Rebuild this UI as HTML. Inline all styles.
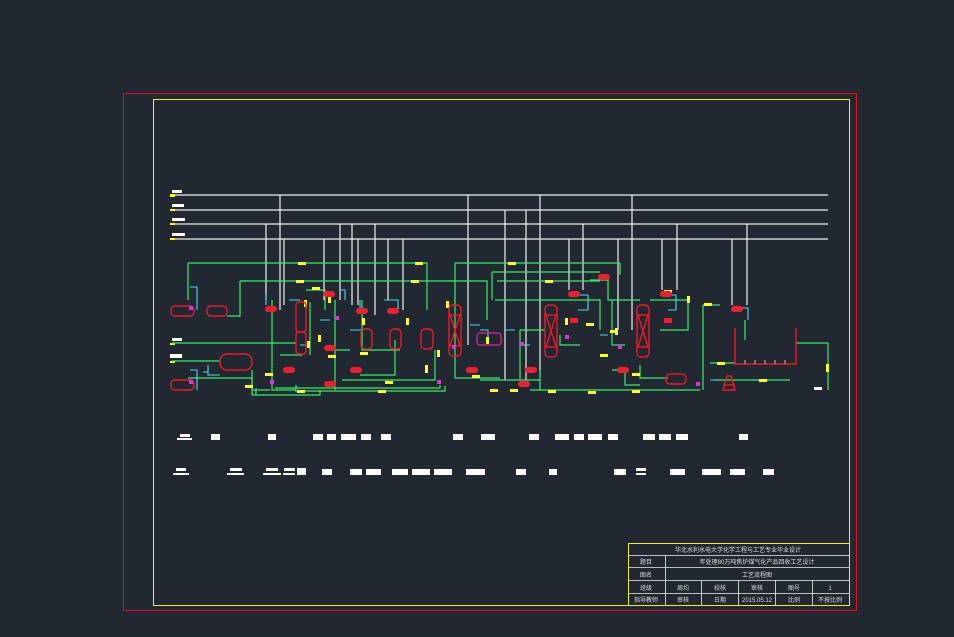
<!DOCTYPE html>
<html><head><meta charset="utf-8"><style>
html,body{margin:0;padding:0;background:#222831;}
body{width:954px;height:637px;overflow:hidden;position:relative;font-family:"Liberation Sans","Noto Sans CJK SC",sans-serif;}
svg{position:absolute;left:0;top:0}
</style></head><body>
<svg width="954" height="637" viewBox="0 0 954 637" xmlns="http://www.w3.org/2000/svg">
<rect x="0" y="0" width="954" height="637" fill="#222831"/>
<g fill="#e01010">
<rect x="123" y="93" width="734" height="1"/><rect x="123" y="610" width="734" height="1"/>
<rect x="123" y="93" width="1" height="518"/><rect x="856" y="93" width="1" height="518"/>
</g>
<g fill="#f0f028">
<rect x="153" y="99" width="697" height="1"/><rect x="153" y="605" width="697" height="1"/>
<rect x="153" y="99" width="1" height="507"/><rect x="849" y="99" width="1" height="507"/>
</g>

<g stroke="#f0f0f0" stroke-width="1.2" fill="none">
<line x1="172" y1="195" x2="828" y2="195"/>
<line x1="172" y1="210" x2="828" y2="210"/>
<line x1="172" y1="224" x2="828" y2="224"/>
<line x1="172" y1="239" x2="828" y2="239"/>
<path d="M280 195V310 M266 224V300 M284 239V305 M324 239V300 M340 224V300 M352 224V305 M358 239V305 M375 224V315 M388 239V300 M403 239V310 M468 195V345 M505 210V380 M526 210V380 M540 195V375 M569 239V290 M583 224V290 M618 239V330 M632 195V330 M662 239V290 M677 224V290 M732 239V305 M747 224V305"/>
</g>
<g fill="#fff">
<rect x="172" y="190" width="10" height="3"/><rect x="172" y="204" width="12" height="3"/><rect x="172" y="218" width="13" height="3"/><rect x="172" y="233" width="13" height="3"/>
<rect x="172" y="338" width="10" height="3"/><rect x="170" y="354" width="12" height="4"/>
<rect x="814" y="387" width="8" height="3"/>
</g>
<g fill="#ff0">
<rect x="170" y="194" width="5" height="3"/><rect x="170" y="209" width="5" height="2"/><rect x="170" y="223" width="5" height="2"/><rect x="170" y="238" width="5" height="2"/>
<rect x="170" y="343" width="5" height="2"/><rect x="170" y="361" width="5" height="2"/>
</g>

<g stroke="#33ee66" stroke-width="1.2" fill="none">
<path d="M188 263H427V310 M188 263V300"/>
<path d="M240 281H487V320 M240 281V316H227"/>
<path d="M172 343H296 M172 361H220 M188 378H252V390H270"/>
<path d="M252 370V395H320V390"/>
<path d="M272 300V390H296 M296 390V385"/>
<path d="M306 290H325V310 M310 302V355 M302 355H280"/>
<path d="M335 300V390 M330 350H350 M362 300V350H400 M360 375H395V340"/>
<path d="M342 380H435V350 M275 388H440V385"/>
<path d="M256 395V388 M295 391H445V386"/>
<path d="M455 263H620V275 M455 263V378H500"/>
<path d="M492 272H600 M492 272V300 M497 281H600"/>
<path d="M480 380H540V370 M495 300H600V330"/>
<path d="M520 330H545 M520 330V380 M560 335V345H580"/>
<path d="M530 390H700 M540 380V390"/>
<path d="M590 280H608V300H640 M612 300V345H625 M650 300H688V330H660"/>
<path d="M612 370H625V385H640 M640 365V378H668"/>
<path d="M703 305V390 M703 305H720 M710 363H735 M715 380H790"/>
<path d="M796 343H828V390"/>
<path d="M745 320V340"/>
</g>
<g stroke="#44ddee" stroke-width="1.1" fill="none">
<path d="M190 287H197V310 M190 370H197V390 M208 365V375H220 M203 372H208"/>
<path d="M266 295V305 M289 300H300 M300 345H310 M360 300V310 M384 300H398V310 M340 290H345V300"/>
<path d="M320 320H330 M350 330H362 M470 325H480 M530 345H520 M480 330H488V340"/>
<path d="M580 295H588V310H578 M668 295H676V310H668 M735 308H748V320"/>
<path d="M600 335H608 M505 330H515 M710 380H720"/>
</g>
<g fill="#ffff22">
<rect x="298" y="262" width="8" height="3"/><rect x="296" y="280" width="8" height="3"/><rect x="312" y="287" width="8" height="3"/>
<rect x="415" y="262" width="8" height="3"/><rect x="508" y="262" width="8" height="3"/><rect x="545" y="280" width="8" height="3"/>
<rect x="328" y="296" width="3" height="7"/><rect x="304" y="300" width="3" height="7"/>
<rect x="307" y="341" width="3" height="7"/><rect x="318" y="335" width="3" height="7"/>
<rect x="245" y="385" width="8" height="3"/><rect x="265" y="373" width="8" height="3"/><rect x="297" y="390" width="8" height="3"/>
<rect x="360" y="352" width="8" height="3"/><rect x="378" y="390" width="8" height="3"/><rect x="328" y="355" width="8" height="3"/>
<rect x="385" y="381" width="8" height="3"/><rect x="411" y="280" width="8" height="3"/>
<rect x="362" y="318" width="3" height="7"/><rect x="406" y="318" width="3" height="7"/><rect x="437" y="350" width="3" height="7"/><rect x="425" y="365" width="3" height="8"/>
<rect x="446" y="301" width="3" height="7"/><rect x="486" y="337" width="3" height="7"/>
<rect x="490" y="389" width="8" height="3"/><rect x="510" y="389" width="8" height="3"/><rect x="472" y="375" width="8" height="3"/>
<rect x="548" y="390" width="8" height="3"/><rect x="586" y="323" width="8" height="3"/><rect x="565" y="318" width="3" height="7"/>
<rect x="610" y="330" width="8" height="3"/><rect x="588" y="391" width="8" height="3"/><rect x="632" y="373" width="8" height="3"/>
<rect x="632" y="390" width="8" height="3"/><rect x="687" y="296" width="3" height="7"/><rect x="615" y="328" width="3" height="7"/>
<rect x="704" y="303" width="8" height="3"/><rect x="717" y="362" width="8" height="3"/><rect x="759" y="379" width="8" height="3"/>
<rect x="826" y="364" width="3" height="8"/><rect x="600" y="354" width="8" height="3"/><rect x="664" y="290" width="8" height="3"/>
</g>
<g stroke="#ee1828" stroke-width="1.4" fill="none">
<rect x="171" y="306" width="23" height="10" rx="4"/>
<rect x="207" y="306" width="20" height="10" rx="4"/>
<rect x="171" y="380" width="23" height="10" rx="4"/>
<rect x="220" y="354" width="32" height="16" rx="7"/>
<rect x="296" y="302" width="10" height="30" rx="3"/>
<rect x="296" y="332" width="10" height="22" rx="3"/>
<rect x="361" y="329" width="11" height="20" rx="4"/>
<rect x="390" y="329" width="11" height="20" rx="4"/>
<rect x="421" y="329" width="12" height="20" rx="4"/>
<rect x="449" y="305" width="12" height="51" rx="4"/><path d="M450 315L460 346M460 315L450 346M449 315H461M449 346H461"/>
<rect x="477" y="333" width="24" height="12" rx="3" stroke="#d02090"/>
<rect x="545" y="305" width="12" height="52" rx="4"/><path d="M546 315L556 347M556 315L546 347M545 315H557M545 347H557"/>
<rect x="637" y="305" width="12" height="52" rx="4"/><path d="M638 315L648 347M648 315L638 347M637 315H649M637 347H649"/>
<rect x="666" y="374" width="20" height="10" rx="4"/>
<path d="M735 328V365 M796 328V365 M735 364H796"/>
<path d="M723 390L727 376H731L735 390Z M723 385H735"/>
</g>
<g stroke="#e0e0e0" stroke-width="0.8"><path d="M745 360V364M755 360V364M765 360V364M775 360V364M785 360V364"/></g>
<g fill="#ee2030">
<rect x="265" y="306" width="12" height="6" rx="3"/><rect x="323" y="291" width="12" height="6" rx="3"/><rect x="356" y="308" width="12" height="6" rx="3"/>
<rect x="387" y="308" width="12" height="6" rx="3"/><rect x="283" y="367" width="12" height="6" rx="3"/><rect x="324" y="345" width="12" height="6" rx="3"/>
<rect x="350" y="367" width="12" height="6" rx="3"/><rect x="324" y="381" width="12" height="6" rx="3"/><rect x="466" y="367" width="12" height="6" rx="3"/>
<rect x="518" y="381" width="12" height="6" rx="3"/><rect x="525" y="367" width="12" height="6" rx="3"/><rect x="568" y="291" width="12" height="6" rx="3"/>
<rect x="598" y="274" width="12" height="6" rx="3"/><rect x="617" y="367" width="12" height="6" rx="3"/><rect x="660" y="291" width="12" height="6" rx="3"/>
<rect x="731" y="306" width="12" height="6" rx="3"/><rect x="570" y="318" width="8" height="5"/><rect x="664" y="318" width="8" height="5"/>
</g>
<g fill="#e030e0">
<rect x="189" y="306" width="4" height="4"/><rect x="189" y="380" width="4" height="4"/><rect x="270" y="380" width="4" height="4"/>
<rect x="335" y="316" width="4" height="4"/><rect x="452" y="345" width="4" height="4"/><rect x="437" y="380" width="4" height="4"/>
<rect x="565" y="335" width="4" height="4"/><rect x="696" y="382" width="4" height="4"/><rect x="520" y="342" width="4" height="4"/>
<rect x="618" y="345" width="4" height="4"/>
</g>

<g fill="#fff">
<rect x="180" y="434" width="10" height="3"/><rect x="177" y="438" width="15" height="2"/>
<rect x="211" y="434" width="9" height="6"/><rect x="268" y="434" width="8" height="6"/>
<rect x="313" y="434" width="10" height="6"/><rect x="327" y="434" width="9" height="6"/><rect x="341" y="434" width="15" height="6"/><rect x="361" y="434" width="10" height="6"/>
<rect x="381" y="434" width="10" height="6"/><rect x="453" y="434" width="10" height="6"/><rect x="481" y="434" width="14" height="6"/>
<rect x="529" y="434" width="10" height="6"/><rect x="555" y="434" width="14" height="6"/><rect x="574" y="434" width="10" height="6"/><rect x="588" y="434" width="14" height="6"/>
<rect x="608" y="434" width="10" height="6"/><rect x="643" y="434" width="12" height="6"/><rect x="659" y="434" width="12" height="6"/><rect x="676" y="434" width="12" height="6"/><rect x="739" y="434" width="9" height="6"/>
<rect x="176" y="468" width="10" height="3"/><rect x="173" y="473" width="16" height="2"/>
<rect x="230" y="468" width="12" height="3"/><rect x="227" y="473" width="17" height="2"/>
<rect x="266" y="468" width="12" height="3"/><rect x="263" y="473" width="18" height="2"/><rect x="284" y="468" width="11" height="3"/><rect x="283" y="473" width="12" height="2"/><rect x="297" y="468" width="9" height="7"/>
<rect x="322" y="469" width="10" height="6"/><rect x="350" y="469" width="12" height="6"/><rect x="366" y="469" width="15" height="6"/>
<rect x="392" y="469" width="16" height="6"/><rect x="412" y="469" width="18" height="6"/><rect x="434" y="469" width="18" height="6"/>
<rect x="466" y="469" width="19" height="6"/><rect x="516" y="469" width="10" height="6"/><rect x="549" y="469" width="8" height="6"/>
<rect x="614" y="469" width="12" height="6"/><rect x="636" y="468" width="10" height="3"/><rect x="636" y="473" width="10" height="2"/><rect x="670" y="469" width="15" height="6"/>
<rect x="702" y="469" width="19" height="6"/><rect x="730" y="469" width="15" height="6"/><rect x="763" y="469" width="11" height="6"/>
</g>

<g stroke="#f0f0f0" stroke-width="0.8" fill="none">
<path d="M628 555.5H849 M628 567.5H849 M628 580.5H849 M628 593.5H849"/>
<path d="M665.5 555V606 M701.5 580V606 M738.5 580V606 M775.5 580V606 M812.5 580V606"/>
</g>
<g fill="#f0f028">
<rect x="628" y="543" width="222" height="1"/><rect x="628" y="543" width="1" height="63"/>
</g>
<g fill="#ddd" font-size="6" text-anchor="middle" font-family="Liberation Sans, Noto Sans CJK SC, sans-serif">
<text x="738" y="552">华北水利水电大学化学工程与工艺专业毕业设计</text>
<text x="646" y="564">题目</text><text x="757" y="564">年处理80万吨焦炉煤气化产品回收工艺设计</text>
<text x="646" y="577">图名</text><text x="757" y="577">工艺流程图</text>
<text x="646" y="590">班级</text><text x="683" y="590">周均</text><text x="720" y="590">校核</text><text x="757" y="590">审核</text><text x="794" y="590">图号</text><text x="830" y="590">1</text>
<text x="646" y="602">指导教师</text><text x="683" y="602">审核</text><text x="720" y="602">日期</text><text x="757" y="602">2015.05.12</text><text x="794" y="602">比例</text><text x="830" y="602">不按比例</text>
</g>
</svg>
</body></html>
